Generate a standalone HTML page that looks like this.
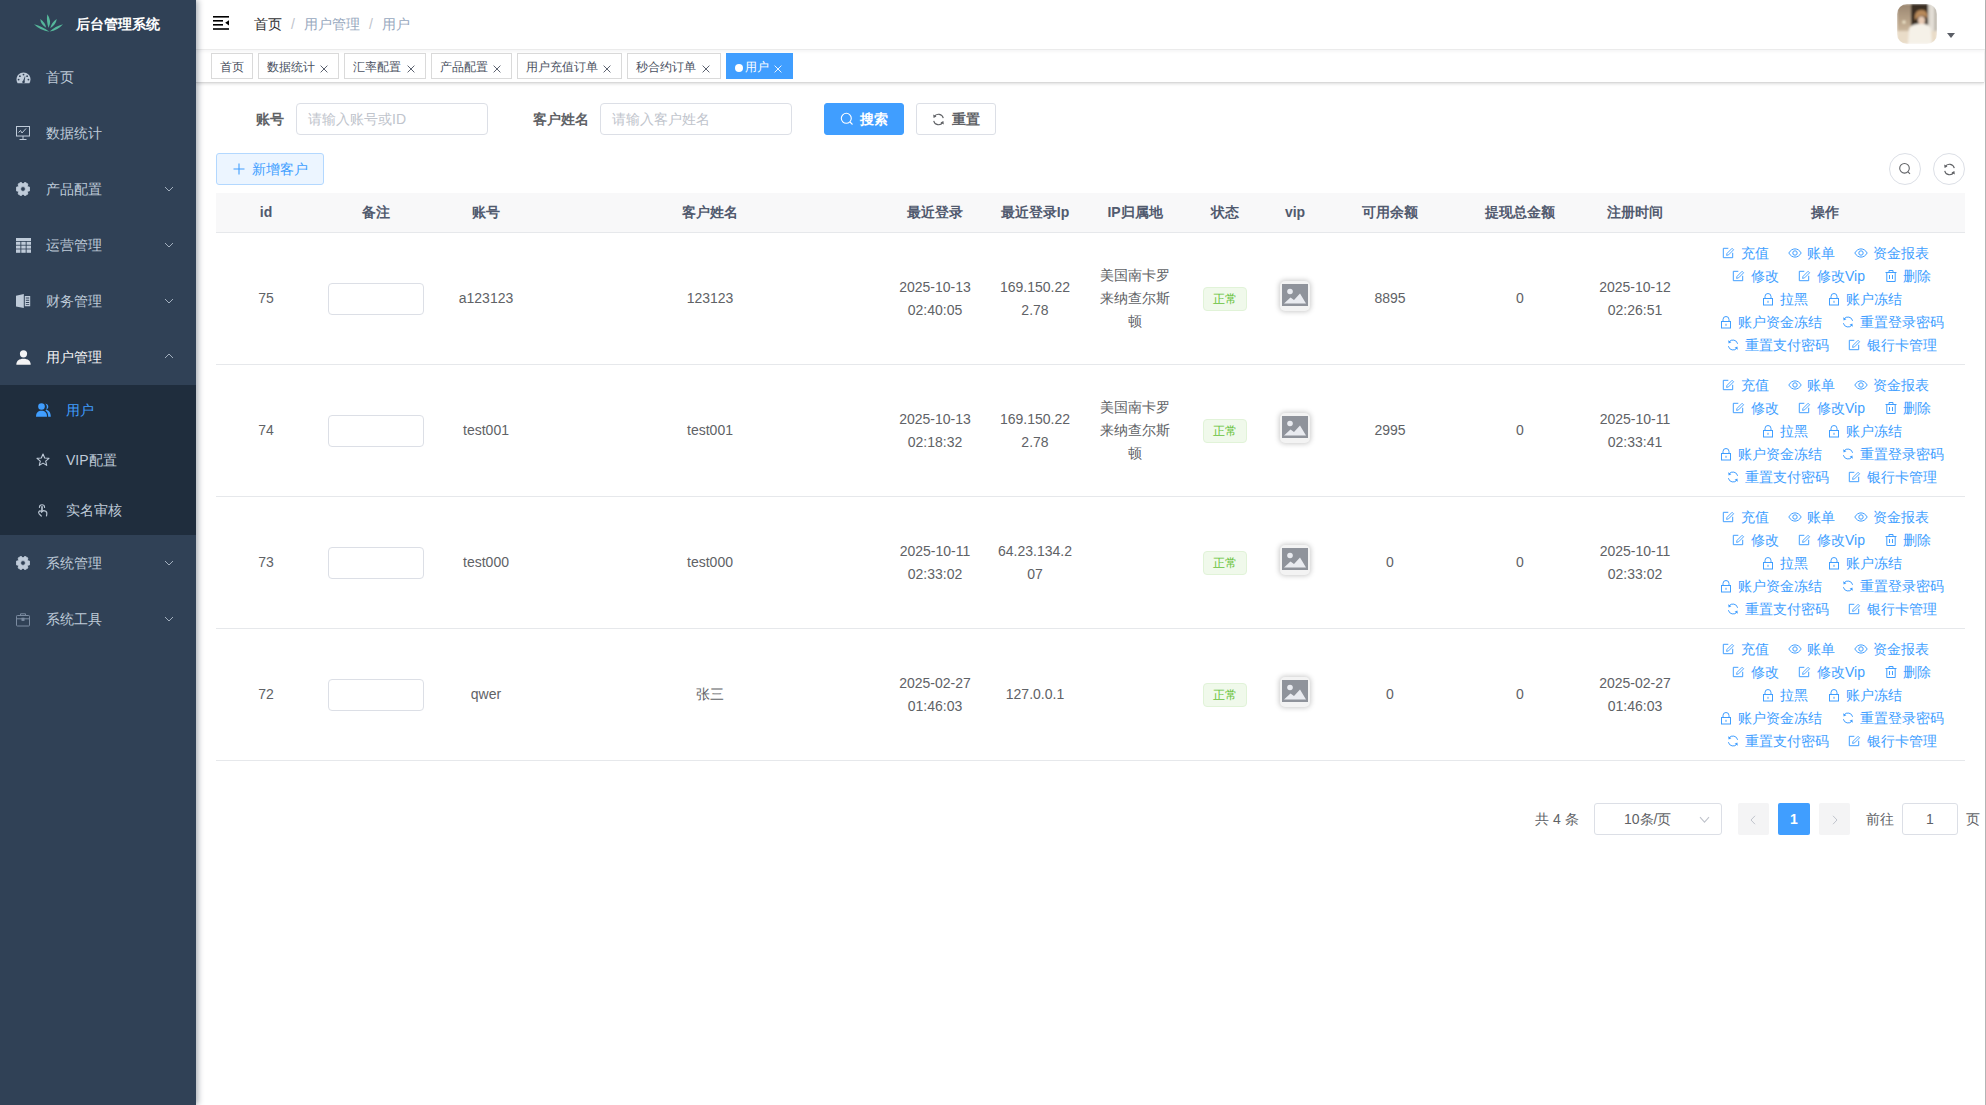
<!DOCTYPE html>
<html><head><meta charset="utf-8">
<style>
*{box-sizing:border-box;margin:0;padding:0}
html,body{width:1986px;height:1105px;overflow:hidden;background:#fff}
body{font-family:"Liberation Sans",sans-serif;font-size:14px;color:#606266;position:relative;-webkit-font-smoothing:antialiased}
.abs{position:absolute}
/* sidebar */
#side{position:absolute;left:0;top:0;width:196px;height:1105px;background:#304156;box-shadow:2px 0 6px rgba(0,21,41,.35);z-index:5}
.logo-t{position:absolute;left:76px;top:14px;font-size:14px;font-weight:bold;color:#fff;line-height:20px;white-space:nowrap}
.mi{position:absolute;left:0;width:196px;height:56px;color:#bfcbd9;font-size:14px;line-height:56px}
.mi .tx{position:absolute;left:46px;top:0}
.mi svg{position:absolute;left:16px;top:21px}
.mi .chev{position:absolute;left:164px;top:25px}
#sub{position:absolute;left:0;top:385px;width:196px;height:150px;background:#1f2d3d}
.si{position:absolute;left:0;width:196px;height:50px;line-height:50px;color:#bfcbd9}
.si .tx{position:absolute;left:66px;top:0}
.si svg{position:absolute;left:36px;top:18px}
/* navbar */
#nav{position:absolute;left:196px;top:0;width:1789px;height:50px;background:#fff;border-bottom:1px solid #ebebeb;box-shadow:0 1px 4px rgba(0,21,41,.06);z-index:1}
#tags{position:absolute;left:196px;top:50px;width:1788px;height:33px;background:#fff;border-bottom:1px solid #d9d9d9;box-shadow:0 1px 3px 0 rgba(0,0,0,.12),0 0 3px 0 rgba(0,0,0,.04)}
.tag{position:absolute;top:3px;height:26px;border:1px solid #dadada;color:#495060;background:#fff;font-size:12px;white-space:nowrap}
.tag .tt{position:absolute;left:8px;top:1px;line-height:24px}
.tag .x{position:absolute;right:10px;top:11px}
.tag.act{background:#409eff;border-color:#409eff;color:#fff}
.tag .dot{position:absolute;left:8px;top:10px;width:8px;height:8px;border-radius:50%;background:#fff}
/* form */
.lbl{position:absolute;font-weight:bold;color:#606266;line-height:32px;white-space:nowrap}
.inp{position:absolute;height:32px;border:1px solid #dcdfe6;border-radius:4px;color:#c0c4cc;line-height:30px;padding-left:11px;white-space:nowrap;background:#fff}
.btn{position:absolute;height:32px;border-radius:3px;line-height:30px;white-space:nowrap;font-weight:bold}
/* table */
#tbl{position:absolute;left:216px;top:193px;width:1749px}
.th{position:absolute;top:0;height:40px;width:100%;background:#f8f8f9;border-bottom:1px solid #e6e8eb}
.tr{position:absolute;left:0;width:100%;height:132px;border-bottom:1px solid #e6e8eb}
.c{position:absolute;top:0;height:100%;display:flex;align-items:center;justify-content:center;text-align:center;line-height:23px;white-space:nowrap}
.th .c{font-weight:bold;color:#515a6e;}
.rin{width:96px;height:32px;border:1px solid #dcdfe6;border-radius:4px;background:#fff}
.stag{display:inline-block;height:24px;line-height:22px;padding:0 9px;font-size:12px;color:#67c23a;background:#f0f9eb;border:1px solid #e1f3d8;border-radius:4px}
.vimg{width:30px;height:30px;border-radius:5px;box-shadow:0 0 5px 1px #ccc;background:#f3f3f3;display:flex;align-items:flex-start;justify-content:center;padding-top:3px;margin-top:-6px}
.ops{display:flex;flex-direction:column;align-items:center;margin-top:2px}
.ol{height:23px;line-height:23px;white-space:nowrap;display:flex;justify-content:center}
.ol.l1,.ol.l2,.ol.l3,.ol.l4{padding-left:13px}
.ob{display:inline-flex;align-items:center;color:#409eff;margin-left:19px}
.ob:first-child{margin-left:0}
.ic{display:block;margin-right:5px;margin-top:-2px}
</style></head><body>
<div id="side">
  <svg class="abs" style="left:33px;top:12px" width="32" height="22" viewBox="0 0 32 22">
    <g fill="#55b79b"><path d="M14.30 2.20 Q13.16 9.17 15.60 15.80 Q19.13 8.60 14.30 2.20 Z"/><path d="M7.20 7.10 Q7.90 13.04 13.20 15.80 Q12.01 10.20 7.20 7.10 Z"/><path d="M23.80 7.10 Q18.72 10.36 17.20 16.20 Q22.77 13.29 23.80 7.10 Z"/><path d="M1.00 12.30 Q7.43 18.66 16.40 19.80 Q9.53 14.34 1.00 12.30 Z"/><path d="M30.00 12.30 Q22.39 14.28 16.60 19.60 Q24.69 18.50 30.00 12.30 Z"/></g>
  </svg>
  <div class="logo-t">后台管理系统</div>

  <div class="mi" style="top:49px">
    <svg width="15" height="12" viewBox="0 0 15 12" style="top:23px"><path fill="#bfcbd9" d="M7.5 0.5 C3.6 0.5 0.5 3.6 0.5 7.5 C0.5 8.9 0.9 10.2 1.6 11.3 L13.4 11.3 C14.1 10.2 14.5 8.9 14.5 7.5 C14.5 3.6 11.4 0.5 7.5 0.5 Z"/><g fill="#304156"><circle cx="7.5" cy="2.6" r="0.9"/><circle cx="3.9" cy="4.2" r="0.9"/><circle cx="11.1" cy="4.2" r="0.9"/><circle cx="2.6" cy="7.6" r="0.9"/><circle cx="12.4" cy="7.6" r="0.9"/><path d="M6.6 10.2 L8.9 4.3 L9.3 4.4 L8.4 10.4 Z"/><circle cx="7.5" cy="10" r="1.2"/></g></svg>
    <span class="tx">首页</span>
  </div>
  <div class="mi" style="top:105px">
    <svg width="14" height="14" viewBox="0 0 14 14" style="top:21px"><g fill="none" stroke="#bfcbd9" stroke-width="1"><rect x="0.5" y="0.5" width="13" height="9.5"/><path d="M2.5 6.5 L4.5 4.5 L6 7 L10 2.5"/><path d="M7 10 V13 M3.5 13.5 H10.5"/></g></svg>
    <span class="tx">数据统计</span>
  </div>
  <div class="mi" style="top:161px">
    <svg width="14" height="14" viewBox="0 0 14 14" style="top:21px;left:16px"><path fill="#bfcbd9" stroke="#bfcbd9" stroke-width="0.8" stroke-linejoin="round" fill-rule="evenodd" d="M11.33 4.50 L13.79 5.31 L13.79 8.69 L11.33 9.50 L11.86 12.04 L8.93 13.73 L7.00 12.00 L5.07 13.73 L2.14 12.04 L2.67 9.50 L0.21 8.69 L0.21 5.31 L2.67 4.50 L2.14 1.96 L5.07 0.27 L7.00 2.00 L8.93 0.27 L11.86 1.96 Z M7 4.6 A2.4 2.4 0 1 0 7 9.4 A2.4 2.4 0 1 0 7 4.6 Z"/></svg>
    <span class="tx">产品配置</span>
    <svg class="chev" width="10" height="6" viewBox="0 0 10 6"><path d="M1 1 L5 5 L9 1" fill="none" stroke="#a9b5c4" stroke-width="0.95"/></svg>
  </div>
  <div class="mi" style="top:217px">
    <svg width="15" height="15" viewBox="0 0 15 15" style="top:21px"><g fill="#bfcbd9"><rect x="0" y="0" width="15" height="3"/><rect x="0" y="3.8" width="4.4" height="3"/><rect x="5.3" y="3.8" width="4.4" height="3"/><rect x="10.6" y="3.8" width="4.4" height="3"/><rect x="0" y="7.6" width="4.4" height="3"/><rect x="5.3" y="7.6" width="4.4" height="3"/><rect x="10.6" y="7.6" width="4.4" height="3"/><rect x="0" y="11.4" width="4.4" height="3.4"/><rect x="5.3" y="11.4" width="4.4" height="3.4"/><rect x="10.6" y="11.4" width="4.4" height="3.4"/></g></svg>
    <span class="tx">运营管理</span>
    <svg class="chev" width="10" height="6" viewBox="0 0 10 6"><path d="M1 1 L5 5 L9 1" fill="none" stroke="#a9b5c4" stroke-width="0.95"/></svg>
  </div>
  <div class="mi" style="top:273px">
    <svg width="15" height="15" viewBox="0 0 15 15" style="top:21px"><g fill="#bfcbd9"><path d="M0 1.8 L7.8 0 L7.8 14 L0 12.5 Z"/><path d="M8.8 2 H14.2 V12.2 H8.8 Z M9.8 3.6 V4.6 H13.2 V3.6 Z M9.8 5.8 V6.8 H13.2 V5.8 Z M9.8 8 V9 H13.2 V8 Z M9.8 10.2 V11.1 H13.2 V10.2 Z" fill-rule="evenodd"/></g></svg>
    <span class="tx">财务管理</span>
    <svg class="chev" width="10" height="6" viewBox="0 0 10 6"><path d="M1 1 L5 5 L9 1" fill="none" stroke="#a9b5c4" stroke-width="0.95"/></svg>
  </div>
  <div class="mi" style="top:329px;color:#f4f4f5">
    <svg width="15" height="15" viewBox="0 0 15 15" style="top:21px"><g fill="#f4f4f5"><circle cx="7.5" cy="3.8" r="3.6"/><path d="M0.3 14.8 C0.3 10.8 3.2 8.8 7.5 8.8 C11.8 8.8 14.7 10.8 14.7 14.8 Z"/></g></svg>
    <span class="tx">用户管理</span>
    <svg class="chev" width="10" height="6" viewBox="0 0 10 6" style="top:24px"><path d="M1 5 L5 1 L9 5" fill="none" stroke="#a9b5c4" stroke-width="0.95"/></svg>
  </div>
  <div id="sub">
    <div class="si" style="top:0;color:#409eff">
      <svg width="15" height="14" viewBox="0 0 15 14" style="top:18px"><g fill="#409eff"><circle cx="5.5" cy="3.5" r="3.3"/><path d="M0 13.8 C0 9.6 2.2 7.8 5.5 7.8 C8.8 7.8 11 9.6 11 13.8 Z"/><path d="M9.2 0.6 C11 0.9 12.3 2.2 12.3 3.8 C12.3 5.2 11.4 6.3 10.1 6.8 C12.9 7.4 14.8 9.4 14.8 13.8 H12.2 C12.2 10.5 11.2 8.6 9.4 7.6 C10.5 6.6 10.9 5.3 10.8 3.8 C10.7 2.5 10.2 1.4 9.2 0.6 Z"/></g></svg>
      <span class="tx">用户</span>
    </div>
    <div class="si" style="top:50px">
      <svg width="14" height="14" viewBox="0 0 14 14" style="top:18px"><path d="M7 1 L8.7 5 L13 5.3 L9.7 8.1 L10.7 12.4 L7 10.1 L3.3 12.4 L4.3 8.1 L1 5.3 L5.3 5 Z" fill="none" stroke="#bfcbd9" stroke-width="1.1" stroke-linejoin="round"/></svg>
      <span class="tx">VIP配置</span>
    </div>
    <div class="si" style="top:100px">
      <svg width="14" height="15" viewBox="0 0 14 15" style="top:18px"><g fill="none" stroke="#b5c1cf" stroke-linecap="round"><path d="M3.4 4.4 A2.6 2.6 0 0 1 8.6 4.4" stroke-width="1.1"/><path d="M6 3.8 V7.6" stroke-width="1.7"/><path d="M3.2 8.2 C2.4 8.8 2.5 9.8 3.2 10.8 L5.3 13" stroke-width="1.2"/><path d="M7.2 7.6 C9 7.6 10.6 8.3 10.8 9.8 C10.9 11 10.7 12 10.5 12.8" stroke-width="1.2"/><path d="M3.4 8.1 L5.6 7.9 M7 8 L5.4 9.4" stroke-width="1.1"/></g></svg>
      <span class="tx">实名审核</span>
    </div>
  </div>
  <div class="mi" style="top:535px">
    <svg width="14" height="14" viewBox="0 0 14 14" style="top:21px;left:16px"><path fill="#bfcbd9" stroke="#bfcbd9" stroke-width="0.8" stroke-linejoin="round" fill-rule="evenodd" d="M11.33 4.50 L13.79 5.31 L13.79 8.69 L11.33 9.50 L11.86 12.04 L8.93 13.73 L7.00 12.00 L5.07 13.73 L2.14 12.04 L2.67 9.50 L0.21 8.69 L0.21 5.31 L2.67 4.50 L2.14 1.96 L5.07 0.27 L7.00 2.00 L8.93 0.27 L11.86 1.96 Z M7 4.6 A2.4 2.4 0 1 0 7 9.4 A2.4 2.4 0 1 0 7 4.6 Z"/></svg>
    <span class="tx">系统管理</span>
    <svg class="chev" width="10" height="6" viewBox="0 0 10 6"><path d="M1 1 L5 5 L9 1" fill="none" stroke="#a9b5c4" stroke-width="0.95"/></svg>
  </div>
  <div class="mi" style="top:591px">
    <svg width="15" height="14" viewBox="0 0 15 14" style="top:22px"><g fill="none" stroke="#7b8ba0" stroke-width="1"><rect x="0.5" y="2.5" width="13" height="10.5" rx="0.8"/><path d="M4.5 2.5 V0.8 H9.5 V2.5"/><path d="M0.5 5.8 H13.5"/><rect x="6" y="5.2" width="2" height="2.2" fill="#7b8ba0"/></g></svg>
    <span class="tx">系统工具</span>
    <svg class="chev" width="10" height="6" viewBox="0 0 10 6"><path d="M1 1 L5 5 L9 1" fill="none" stroke="#a9b5c4" stroke-width="0.95"/></svg>
  </div>
</div>

<div id="nav">
  <svg class="abs" style="left:17px;top:16px" width="16" height="14" viewBox="0 0 16 14"><g fill="#000"><rect x="0" y="0" width="16" height="1.6"/><rect x="0" y="4" width="10" height="1.6"/><rect x="0" y="8" width="10" height="1.6"/><rect x="0" y="12.2" width="16" height="1.6"/><path d="M16 4.2 L12.2 6.8 L16 9.4 Z"/></g></svg>
  <div class="abs" style="left:58px;top:-1px;line-height:50px;font-size:14px;white-space:nowrap">
    <span style="color:#303133">首页</span><span style="color:#c0c4cc;margin:0 9px">/</span><span style="color:#97a8be">用户管理</span><span style="color:#c0c4cc;margin:0 9px">/</span><span style="color:#97a8be">用户</span>
  </div>
  <svg class="abs" style="left:1701px;top:4px" width="40" height="40" viewBox="0 0 40 40">
  <defs><clipPath id="avc"><rect width="40" height="40" rx="10"/></clipPath>
  <linearGradient id="avl" x1="0" y1="0" x2="0" y2="1"><stop offset="0" stop-color="#9a8670"/><stop offset="0.55" stop-color="#c2ad92"/><stop offset="1" stop-color="#e6d8c4"/></linearGradient>
  <linearGradient id="avr" x1="0" y1="0" x2="1" y2="0"><stop offset="0" stop-color="#cfc8bd"/><stop offset="0.5" stop-color="#e9e5de"/><stop offset="1" stop-color="#a9a297"/></linearGradient></defs>
  <filter id="avb" x="-10%" y="-10%" width="120%" height="120%"><feGaussianBlur stdDeviation="0.9"/></filter><g clip-path="url(#avc)"><g filter="url(#avb)">
    <rect width="40" height="40" fill="url(#avl)"/>
    <rect x="14" y="0" width="19" height="24" fill="#3a2e24"/>
    <rect x="31" y="0" width="9" height="40" fill="url(#avr)"/>
    <rect x="0" y="27" width="40" height="13" fill="#e9dcc8"/>
    <circle cx="7" cy="18" r="1.6" fill="#f4ecd0"/>
    <path d="M18 16 C17 9 20 6 24.5 6 C29 6 31 9 30.5 15 C29 12 26 11 23 12 C21 13 19.5 15 18 16 Z" fill="#b8895a"/>
    <ellipse cx="24.5" cy="16.5" rx="3.5" ry="4.2" fill="#e8cbb4"/>
    <path d="M11 40 L12 25 C13 22 16 20.5 20 20 L28 20 C32 21 34 23 34 27 L35 40 Z" fill="#f5f1e8"/>
  </g></g>
</svg>
  <svg class="abs" style="left:1751px;top:33px" width="8" height="5" viewBox="0 0 8 5"><path d="M0 0 H8 L4 5 Z" fill="#5a5e66"/></svg>
</div>
<div id="tags">
  <div class="tag" style="left:15px;width:42px"><span class="tt">首页</span></div>
  <div class="tag" style="left:62px;width:81px"><span class="tt">数据统计</span><svg class="x" width="8" height="8" viewBox="0 0 8 8"><path d="M0.6 0.6 L7.4 7.4 M7.4 0.6 L0.6 7.4" stroke="#495060" stroke-width="0.9"/></svg></div>
  <div class="tag" style="left:148px;width:82px"><span class="tt">汇率配置</span><svg class="x" width="8" height="8" viewBox="0 0 8 8"><path d="M0.6 0.6 L7.4 7.4 M7.4 0.6 L0.6 7.4" stroke="#495060" stroke-width="0.9"/></svg></div>
  <div class="tag" style="left:235px;width:81px"><span class="tt">产品配置</span><svg class="x" width="8" height="8" viewBox="0 0 8 8"><path d="M0.6 0.6 L7.4 7.4 M7.4 0.6 L0.6 7.4" stroke="#495060" stroke-width="0.9"/></svg></div>
  <div class="tag" style="left:321px;width:105px"><span class="tt">用户充值订单</span><svg class="x" width="8" height="8" viewBox="0 0 8 8"><path d="M0.6 0.6 L7.4 7.4 M7.4 0.6 L0.6 7.4" stroke="#495060" stroke-width="0.9"/></svg></div>
  <div class="tag" style="left:431px;width:94px"><span class="tt">秒合约订单</span><svg class="x" width="8" height="8" viewBox="0 0 8 8"><path d="M0.6 0.6 L7.4 7.4 M7.4 0.6 L0.6 7.4" stroke="#495060" stroke-width="0.9"/></svg></div>
  <div class="tag act" style="left:530px;width:67px"><span class="dot"></span><span class="tt" style="left:18px">用户</span><svg class="x" width="8" height="8" viewBox="0 0 8 8"><path d="M0.6 0.6 L7.4 7.4 M7.4 0.6 L0.6 7.4" stroke="#fff" stroke-width="0.9"/></svg></div>
</div>

<div class="lbl" style="left:256px;top:103px">账号</div>
<div class="inp" style="left:296px;top:103px;width:192px">请输入账号或ID</div>
<div class="lbl" style="left:533px;top:103px">客户姓名</div>
<div class="inp" style="left:600px;top:103px;width:192px">请输入客户姓名</div>
<div class="btn" style="left:824px;top:103px;width:80px;background:#409eff;border:1px solid #409eff;color:#fff">
  <svg class="abs" style="left:15px;top:8px" width="14" height="14" viewBox="0 0 14 14"><g fill="none" stroke="#fff" stroke-width="1.1"><circle cx="6.3" cy="6.3" r="5"/><path d="M10 10 L12.5 12.5"/></g></svg>
  <span class="abs" style="left:35px;top:0">搜索</span>
</div>
<div class="btn" style="left:916px;top:103px;width:80px;background:#fff;border:1px solid #dcdfe6;color:#606266">
  <svg class="abs" style="left:15px;top:9px" width="13" height="13" viewBox="0 0 13 13"><g fill="none" stroke="#606266" stroke-width="1.1"><path d="M11.3 5.2 A5 5 0 0 0 2.2 3.6"/><path d="M1.7 7.8 A5 5 0 0 0 10.8 9.4"/></g><path d="M1.2 1.6 L1.6 5 L4.5 3.5 Z M11.8 11.4 L11.4 8 L8.5 9.5 Z" fill="#606266"/></svg>
  <span class="abs" style="left:35px;top:0">重置</span>
</div>

<div class="btn" style="left:216px;top:153px;width:108px;background:#ecf5ff;border:1px solid #b3d8ff;color:#409eff;font-weight:normal">
  <svg class="abs" style="left:16px;top:9px" width="12" height="12" viewBox="0 0 12 12"><path d="M6 0.5 V11.5 M0.5 6 H11.5" stroke="#409eff" stroke-width="1.1"/></svg>
  <span class="abs" style="left:35px;top:0">新增客户</span>
</div>
<div class="abs" style="left:1889px;top:153px;width:32px;height:32px;border:1px solid #dcdfe6;border-radius:50%">
  <svg class="abs" style="left:8px;top:8px" width="14" height="14" viewBox="0 0 14 14"><g fill="none" stroke="#606266" stroke-width="1.1"><circle cx="6.5" cy="6.3" r="4.8"/><path d="M10 9.8 L12 11.8"/></g></svg>
</div>
<div class="abs" style="left:1933px;top:153px;width:32px;height:32px;border:1px solid #dcdfe6;border-radius:50%">
  <svg class="abs" style="left:9px;top:9px" width="13" height="13" viewBox="0 0 13 13"><g fill="none" stroke="#606266" stroke-width="1.1"><path d="M11.3 5.2 A5 5 0 0 0 2.2 3.6"/><path d="M1.7 7.8 A5 5 0 0 0 10.8 9.4"/></g><path d="M1.2 1.6 L1.6 5 L4.5 3.5 Z M11.8 11.4 L11.4 8 L8.5 9.5 Z" fill="#606266"/></svg>
</div>

<!--TABLE-->
<div id="tbl">
<div class="th">
<div class="c" style="left:0px;width:100px">id</div>
<div class="c" style="left:100px;width:120px">备注</div>
<div class="c" style="left:220px;width:100px">账号</div>
<div class="c" style="left:320px;width:348px">客户姓名</div>
<div class="c" style="left:668px;width:102px">最近登录</div>
<div class="c" style="left:770px;width:98px">最近登录Ip</div>
<div class="c" style="left:868px;width:102px">IP归属地</div>
<div class="c" style="left:970px;width:78px">状态</div>
<div class="c" style="left:1048px;width:62px">vip</div>
<div class="c" style="left:1110px;width:128px">可用余额</div>
<div class="c" style="left:1238px;width:132px">提现总金额</div>
<div class="c" style="left:1370px;width:98px">注册时间</div>
<div class="c" style="left:1468px;width:282px">操作</div>
</div>
<div class="tr" style="top:40px">
<div class="c" style="left:0px;width:100px">75</div>
<div class="c" style="left:100px;width:120px"><div class="rin"></div></div>
<div class="c" style="left:220px;width:100px">a123123</div>
<div class="c" style="left:320px;width:348px">123123</div>
<div class="c" style="left:668px;width:102px">2025-10-13<br>02:40:05</div>
<div class="c" style="left:770px;width:98px">169.150.22<br>2.78</div>
<div class="c" style="left:868px;width:102px">美国南卡罗<br>来纳查尔斯<br>顿</div>
<div class="c" style="left:970px;width:78px"><span class="stag">正常</span></div>
<div class="c" style="left:1048px;width:62px"><div class="vimg"><svg width="26" height="22" viewBox="0 0 26 22"><rect width="26" height="22" fill="#8f939b"/><circle cx="8" cy="7.5" r="2.8" fill="#e9ebf0"/><path d="M2 19.5 L8.5 13.5 L12 16 L18 9.5 L24 19.5 Z" fill="#e9ebf0"/></svg></div></div>
<div class="c" style="left:1110px;width:128px">8895</div>
<div class="c" style="left:1238px;width:132px">0</div>
<div class="c" style="left:1370px;width:98px">2025-10-12<br>02:26:51</div>
<div class="c" style="left:1468px;width:282px"><div class="ops"><div class="ol l0"><span class="ob"><svg class="ic" width="14" height="14" viewBox="0 0 14 14"><g fill="none" stroke="#409eff" stroke-width="1"><path d="M6.3 2.3 H1.3 V11.7 H10.7 V6.8"/><path d="M4.6 9.4 L5 7.4 L10.1 2.3 L11.6 3.8 L6.5 8.9 Z" stroke-width="0.9"/></g></svg><span class="ot">充值</span></span><span class="ob"><svg class="ic" width="14" height="14" viewBox="0 0 14 14"><g fill="none" stroke="#409eff" stroke-width="1"><path d="M0.8 7 C2.5 4.2 4.6 2.9 7 2.9 C9.4 2.9 11.5 4.2 13.2 7 C11.5 9.8 9.4 11.1 7 11.1 C4.6 11.1 2.5 9.8 0.8 7 Z"/><circle cx="7" cy="7" r="2.2"/></g></svg><span class="ot">账单</span></span><span class="ob"><svg class="ic" width="14" height="14" viewBox="0 0 14 14"><g fill="none" stroke="#409eff" stroke-width="1"><path d="M0.8 7 C2.5 4.2 4.6 2.9 7 2.9 C9.4 2.9 11.5 4.2 13.2 7 C11.5 9.8 9.4 11.1 7 11.1 C4.6 11.1 2.5 9.8 0.8 7 Z"/><circle cx="7" cy="7" r="2.2"/></g></svg><span class="ot">资金报表</span></span></div><div class="ol l1"><span class="ob"><svg class="ic" width="14" height="14" viewBox="0 0 14 14"><g fill="none" stroke="#409eff" stroke-width="1"><path d="M6.3 2.3 H1.3 V11.7 H10.7 V6.8"/><path d="M4.6 9.4 L5 7.4 L10.1 2.3 L11.6 3.8 L6.5 8.9 Z" stroke-width="0.9"/></g></svg><span class="ot">修改</span></span><span class="ob"><svg class="ic" width="14" height="14" viewBox="0 0 14 14"><g fill="none" stroke="#409eff" stroke-width="1"><path d="M6.3 2.3 H1.3 V11.7 H10.7 V6.8"/><path d="M4.6 9.4 L5 7.4 L10.1 2.3 L11.6 3.8 L6.5 8.9 Z" stroke-width="0.9"/></g></svg><span class="ot">修改Vip</span></span><span class="ob"><svg class="ic" width="14" height="14" viewBox="0 0 14 14"><g fill="none" stroke="#409eff" stroke-width="1"><path d="M1.5 3.5 H12.5"/><path d="M5 3.5 V1.5 H9 V3.5"/><path d="M2.8 3.5 V12.5 H11.2 V3.5"/><path d="M5.5 6 V10 M8.5 6 V10"/></g></svg><span class="ot">删除</span></span></div><div class="ol l2"><span class="ob"><svg class="ic" width="14" height="14" viewBox="0 0 14 14"><g fill="none" stroke="#409eff" stroke-width="1"><path d="M4 6.5 V4.5 A3 3 0 0 1 10 4.5 V6.5"/><rect x="2.5" y="6.5" width="9" height="6.5"/></g><rect x="6.5" y="8.8" width="1" height="2" fill="#409eff"/></svg><span class="ot">拉黑</span></span><span class="ob"><svg class="ic" width="14" height="14" viewBox="0 0 14 14"><g fill="none" stroke="#409eff" stroke-width="1"><path d="M4 6.5 V4.5 A3 3 0 0 1 10 4.5 V6.5"/><rect x="2.5" y="6.5" width="9" height="6.5"/></g><rect x="6.5" y="8.8" width="1" height="2" fill="#409eff"/></svg><span class="ot">账户冻结</span></span></div><div class="ol l3"><span class="ob"><svg class="ic" width="14" height="14" viewBox="0 0 14 14"><g fill="none" stroke="#409eff" stroke-width="1"><path d="M4 6.5 V4.5 A3 3 0 0 1 10 4.5 V6.5"/><rect x="2.5" y="6.5" width="9" height="6.5"/></g><rect x="6.5" y="8.8" width="1" height="2" fill="#409eff"/></svg><span class="ot">账户资金冻结</span></span><span class="ob"><svg class="ic" width="14" height="14" viewBox="0 0 14 14"><g fill="none" stroke="#409eff" stroke-width="1"><path d="M11.6 5.8 A4.8 4.8 0 0 0 3 4"/><path d="M2.4 8.2 A4.8 4.8 0 0 0 11 10"/></g><path d="M2.2 2.2 L2.6 5.6 L5.4 4.2 Z M11.8 11.8 L11.4 8.4 L8.6 9.8 Z" fill="#409eff"/></svg><span class="ot">重置登录密码</span></span></div><div class="ol l4"><span class="ob"><svg class="ic" width="14" height="14" viewBox="0 0 14 14"><g fill="none" stroke="#409eff" stroke-width="1"><path d="M11.6 5.8 A4.8 4.8 0 0 0 3 4"/><path d="M2.4 8.2 A4.8 4.8 0 0 0 11 10"/></g><path d="M2.2 2.2 L2.6 5.6 L5.4 4.2 Z M11.8 11.8 L11.4 8.4 L8.6 9.8 Z" fill="#409eff"/></svg><span class="ot">重置支付密码</span></span><span class="ob"><svg class="ic" width="14" height="14" viewBox="0 0 14 14"><g fill="none" stroke="#409eff" stroke-width="1"><path d="M6.3 2.3 H1.3 V11.7 H10.7 V6.8"/><path d="M4.6 9.4 L5 7.4 L10.1 2.3 L11.6 3.8 L6.5 8.9 Z" stroke-width="0.9"/></g></svg><span class="ot">银行卡管理</span></span></div></div></div>
</div>
<div class="tr" style="top:172px">
<div class="c" style="left:0px;width:100px">74</div>
<div class="c" style="left:100px;width:120px"><div class="rin"></div></div>
<div class="c" style="left:220px;width:100px">test001</div>
<div class="c" style="left:320px;width:348px">test001</div>
<div class="c" style="left:668px;width:102px">2025-10-13<br>02:18:32</div>
<div class="c" style="left:770px;width:98px">169.150.22<br>2.78</div>
<div class="c" style="left:868px;width:102px">美国南卡罗<br>来纳查尔斯<br>顿</div>
<div class="c" style="left:970px;width:78px"><span class="stag">正常</span></div>
<div class="c" style="left:1048px;width:62px"><div class="vimg"><svg width="26" height="22" viewBox="0 0 26 22"><rect width="26" height="22" fill="#8f939b"/><circle cx="8" cy="7.5" r="2.8" fill="#e9ebf0"/><path d="M2 19.5 L8.5 13.5 L12 16 L18 9.5 L24 19.5 Z" fill="#e9ebf0"/></svg></div></div>
<div class="c" style="left:1110px;width:128px">2995</div>
<div class="c" style="left:1238px;width:132px">0</div>
<div class="c" style="left:1370px;width:98px">2025-10-11<br>02:33:41</div>
<div class="c" style="left:1468px;width:282px"><div class="ops"><div class="ol l0"><span class="ob"><svg class="ic" width="14" height="14" viewBox="0 0 14 14"><g fill="none" stroke="#409eff" stroke-width="1"><path d="M6.3 2.3 H1.3 V11.7 H10.7 V6.8"/><path d="M4.6 9.4 L5 7.4 L10.1 2.3 L11.6 3.8 L6.5 8.9 Z" stroke-width="0.9"/></g></svg><span class="ot">充值</span></span><span class="ob"><svg class="ic" width="14" height="14" viewBox="0 0 14 14"><g fill="none" stroke="#409eff" stroke-width="1"><path d="M0.8 7 C2.5 4.2 4.6 2.9 7 2.9 C9.4 2.9 11.5 4.2 13.2 7 C11.5 9.8 9.4 11.1 7 11.1 C4.6 11.1 2.5 9.8 0.8 7 Z"/><circle cx="7" cy="7" r="2.2"/></g></svg><span class="ot">账单</span></span><span class="ob"><svg class="ic" width="14" height="14" viewBox="0 0 14 14"><g fill="none" stroke="#409eff" stroke-width="1"><path d="M0.8 7 C2.5 4.2 4.6 2.9 7 2.9 C9.4 2.9 11.5 4.2 13.2 7 C11.5 9.8 9.4 11.1 7 11.1 C4.6 11.1 2.5 9.8 0.8 7 Z"/><circle cx="7" cy="7" r="2.2"/></g></svg><span class="ot">资金报表</span></span></div><div class="ol l1"><span class="ob"><svg class="ic" width="14" height="14" viewBox="0 0 14 14"><g fill="none" stroke="#409eff" stroke-width="1"><path d="M6.3 2.3 H1.3 V11.7 H10.7 V6.8"/><path d="M4.6 9.4 L5 7.4 L10.1 2.3 L11.6 3.8 L6.5 8.9 Z" stroke-width="0.9"/></g></svg><span class="ot">修改</span></span><span class="ob"><svg class="ic" width="14" height="14" viewBox="0 0 14 14"><g fill="none" stroke="#409eff" stroke-width="1"><path d="M6.3 2.3 H1.3 V11.7 H10.7 V6.8"/><path d="M4.6 9.4 L5 7.4 L10.1 2.3 L11.6 3.8 L6.5 8.9 Z" stroke-width="0.9"/></g></svg><span class="ot">修改Vip</span></span><span class="ob"><svg class="ic" width="14" height="14" viewBox="0 0 14 14"><g fill="none" stroke="#409eff" stroke-width="1"><path d="M1.5 3.5 H12.5"/><path d="M5 3.5 V1.5 H9 V3.5"/><path d="M2.8 3.5 V12.5 H11.2 V3.5"/><path d="M5.5 6 V10 M8.5 6 V10"/></g></svg><span class="ot">删除</span></span></div><div class="ol l2"><span class="ob"><svg class="ic" width="14" height="14" viewBox="0 0 14 14"><g fill="none" stroke="#409eff" stroke-width="1"><path d="M4 6.5 V4.5 A3 3 0 0 1 10 4.5 V6.5"/><rect x="2.5" y="6.5" width="9" height="6.5"/></g><rect x="6.5" y="8.8" width="1" height="2" fill="#409eff"/></svg><span class="ot">拉黑</span></span><span class="ob"><svg class="ic" width="14" height="14" viewBox="0 0 14 14"><g fill="none" stroke="#409eff" stroke-width="1"><path d="M4 6.5 V4.5 A3 3 0 0 1 10 4.5 V6.5"/><rect x="2.5" y="6.5" width="9" height="6.5"/></g><rect x="6.5" y="8.8" width="1" height="2" fill="#409eff"/></svg><span class="ot">账户冻结</span></span></div><div class="ol l3"><span class="ob"><svg class="ic" width="14" height="14" viewBox="0 0 14 14"><g fill="none" stroke="#409eff" stroke-width="1"><path d="M4 6.5 V4.5 A3 3 0 0 1 10 4.5 V6.5"/><rect x="2.5" y="6.5" width="9" height="6.5"/></g><rect x="6.5" y="8.8" width="1" height="2" fill="#409eff"/></svg><span class="ot">账户资金冻结</span></span><span class="ob"><svg class="ic" width="14" height="14" viewBox="0 0 14 14"><g fill="none" stroke="#409eff" stroke-width="1"><path d="M11.6 5.8 A4.8 4.8 0 0 0 3 4"/><path d="M2.4 8.2 A4.8 4.8 0 0 0 11 10"/></g><path d="M2.2 2.2 L2.6 5.6 L5.4 4.2 Z M11.8 11.8 L11.4 8.4 L8.6 9.8 Z" fill="#409eff"/></svg><span class="ot">重置登录密码</span></span></div><div class="ol l4"><span class="ob"><svg class="ic" width="14" height="14" viewBox="0 0 14 14"><g fill="none" stroke="#409eff" stroke-width="1"><path d="M11.6 5.8 A4.8 4.8 0 0 0 3 4"/><path d="M2.4 8.2 A4.8 4.8 0 0 0 11 10"/></g><path d="M2.2 2.2 L2.6 5.6 L5.4 4.2 Z M11.8 11.8 L11.4 8.4 L8.6 9.8 Z" fill="#409eff"/></svg><span class="ot">重置支付密码</span></span><span class="ob"><svg class="ic" width="14" height="14" viewBox="0 0 14 14"><g fill="none" stroke="#409eff" stroke-width="1"><path d="M6.3 2.3 H1.3 V11.7 H10.7 V6.8"/><path d="M4.6 9.4 L5 7.4 L10.1 2.3 L11.6 3.8 L6.5 8.9 Z" stroke-width="0.9"/></g></svg><span class="ot">银行卡管理</span></span></div></div></div>
</div>
<div class="tr" style="top:304px">
<div class="c" style="left:0px;width:100px">73</div>
<div class="c" style="left:100px;width:120px"><div class="rin"></div></div>
<div class="c" style="left:220px;width:100px">test000</div>
<div class="c" style="left:320px;width:348px">test000</div>
<div class="c" style="left:668px;width:102px">2025-10-11<br>02:33:02</div>
<div class="c" style="left:770px;width:98px">64.23.134.2<br>07</div>
<div class="c" style="left:868px;width:102px"></div>
<div class="c" style="left:970px;width:78px"><span class="stag">正常</span></div>
<div class="c" style="left:1048px;width:62px"><div class="vimg"><svg width="26" height="22" viewBox="0 0 26 22"><rect width="26" height="22" fill="#8f939b"/><circle cx="8" cy="7.5" r="2.8" fill="#e9ebf0"/><path d="M2 19.5 L8.5 13.5 L12 16 L18 9.5 L24 19.5 Z" fill="#e9ebf0"/></svg></div></div>
<div class="c" style="left:1110px;width:128px">0</div>
<div class="c" style="left:1238px;width:132px">0</div>
<div class="c" style="left:1370px;width:98px">2025-10-11<br>02:33:02</div>
<div class="c" style="left:1468px;width:282px"><div class="ops"><div class="ol l0"><span class="ob"><svg class="ic" width="14" height="14" viewBox="0 0 14 14"><g fill="none" stroke="#409eff" stroke-width="1"><path d="M6.3 2.3 H1.3 V11.7 H10.7 V6.8"/><path d="M4.6 9.4 L5 7.4 L10.1 2.3 L11.6 3.8 L6.5 8.9 Z" stroke-width="0.9"/></g></svg><span class="ot">充值</span></span><span class="ob"><svg class="ic" width="14" height="14" viewBox="0 0 14 14"><g fill="none" stroke="#409eff" stroke-width="1"><path d="M0.8 7 C2.5 4.2 4.6 2.9 7 2.9 C9.4 2.9 11.5 4.2 13.2 7 C11.5 9.8 9.4 11.1 7 11.1 C4.6 11.1 2.5 9.8 0.8 7 Z"/><circle cx="7" cy="7" r="2.2"/></g></svg><span class="ot">账单</span></span><span class="ob"><svg class="ic" width="14" height="14" viewBox="0 0 14 14"><g fill="none" stroke="#409eff" stroke-width="1"><path d="M0.8 7 C2.5 4.2 4.6 2.9 7 2.9 C9.4 2.9 11.5 4.2 13.2 7 C11.5 9.8 9.4 11.1 7 11.1 C4.6 11.1 2.5 9.8 0.8 7 Z"/><circle cx="7" cy="7" r="2.2"/></g></svg><span class="ot">资金报表</span></span></div><div class="ol l1"><span class="ob"><svg class="ic" width="14" height="14" viewBox="0 0 14 14"><g fill="none" stroke="#409eff" stroke-width="1"><path d="M6.3 2.3 H1.3 V11.7 H10.7 V6.8"/><path d="M4.6 9.4 L5 7.4 L10.1 2.3 L11.6 3.8 L6.5 8.9 Z" stroke-width="0.9"/></g></svg><span class="ot">修改</span></span><span class="ob"><svg class="ic" width="14" height="14" viewBox="0 0 14 14"><g fill="none" stroke="#409eff" stroke-width="1"><path d="M6.3 2.3 H1.3 V11.7 H10.7 V6.8"/><path d="M4.6 9.4 L5 7.4 L10.1 2.3 L11.6 3.8 L6.5 8.9 Z" stroke-width="0.9"/></g></svg><span class="ot">修改Vip</span></span><span class="ob"><svg class="ic" width="14" height="14" viewBox="0 0 14 14"><g fill="none" stroke="#409eff" stroke-width="1"><path d="M1.5 3.5 H12.5"/><path d="M5 3.5 V1.5 H9 V3.5"/><path d="M2.8 3.5 V12.5 H11.2 V3.5"/><path d="M5.5 6 V10 M8.5 6 V10"/></g></svg><span class="ot">删除</span></span></div><div class="ol l2"><span class="ob"><svg class="ic" width="14" height="14" viewBox="0 0 14 14"><g fill="none" stroke="#409eff" stroke-width="1"><path d="M4 6.5 V4.5 A3 3 0 0 1 10 4.5 V6.5"/><rect x="2.5" y="6.5" width="9" height="6.5"/></g><rect x="6.5" y="8.8" width="1" height="2" fill="#409eff"/></svg><span class="ot">拉黑</span></span><span class="ob"><svg class="ic" width="14" height="14" viewBox="0 0 14 14"><g fill="none" stroke="#409eff" stroke-width="1"><path d="M4 6.5 V4.5 A3 3 0 0 1 10 4.5 V6.5"/><rect x="2.5" y="6.5" width="9" height="6.5"/></g><rect x="6.5" y="8.8" width="1" height="2" fill="#409eff"/></svg><span class="ot">账户冻结</span></span></div><div class="ol l3"><span class="ob"><svg class="ic" width="14" height="14" viewBox="0 0 14 14"><g fill="none" stroke="#409eff" stroke-width="1"><path d="M4 6.5 V4.5 A3 3 0 0 1 10 4.5 V6.5"/><rect x="2.5" y="6.5" width="9" height="6.5"/></g><rect x="6.5" y="8.8" width="1" height="2" fill="#409eff"/></svg><span class="ot">账户资金冻结</span></span><span class="ob"><svg class="ic" width="14" height="14" viewBox="0 0 14 14"><g fill="none" stroke="#409eff" stroke-width="1"><path d="M11.6 5.8 A4.8 4.8 0 0 0 3 4"/><path d="M2.4 8.2 A4.8 4.8 0 0 0 11 10"/></g><path d="M2.2 2.2 L2.6 5.6 L5.4 4.2 Z M11.8 11.8 L11.4 8.4 L8.6 9.8 Z" fill="#409eff"/></svg><span class="ot">重置登录密码</span></span></div><div class="ol l4"><span class="ob"><svg class="ic" width="14" height="14" viewBox="0 0 14 14"><g fill="none" stroke="#409eff" stroke-width="1"><path d="M11.6 5.8 A4.8 4.8 0 0 0 3 4"/><path d="M2.4 8.2 A4.8 4.8 0 0 0 11 10"/></g><path d="M2.2 2.2 L2.6 5.6 L5.4 4.2 Z M11.8 11.8 L11.4 8.4 L8.6 9.8 Z" fill="#409eff"/></svg><span class="ot">重置支付密码</span></span><span class="ob"><svg class="ic" width="14" height="14" viewBox="0 0 14 14"><g fill="none" stroke="#409eff" stroke-width="1"><path d="M6.3 2.3 H1.3 V11.7 H10.7 V6.8"/><path d="M4.6 9.4 L5 7.4 L10.1 2.3 L11.6 3.8 L6.5 8.9 Z" stroke-width="0.9"/></g></svg><span class="ot">银行卡管理</span></span></div></div></div>
</div>
<div class="tr" style="top:436px">
<div class="c" style="left:0px;width:100px">72</div>
<div class="c" style="left:100px;width:120px"><div class="rin"></div></div>
<div class="c" style="left:220px;width:100px">qwer</div>
<div class="c" style="left:320px;width:348px">张三</div>
<div class="c" style="left:668px;width:102px">2025-02-27<br>01:46:03</div>
<div class="c" style="left:770px;width:98px">127.0.0.1</div>
<div class="c" style="left:868px;width:102px"></div>
<div class="c" style="left:970px;width:78px"><span class="stag">正常</span></div>
<div class="c" style="left:1048px;width:62px"><div class="vimg"><svg width="26" height="22" viewBox="0 0 26 22"><rect width="26" height="22" fill="#8f939b"/><circle cx="8" cy="7.5" r="2.8" fill="#e9ebf0"/><path d="M2 19.5 L8.5 13.5 L12 16 L18 9.5 L24 19.5 Z" fill="#e9ebf0"/></svg></div></div>
<div class="c" style="left:1110px;width:128px">0</div>
<div class="c" style="left:1238px;width:132px">0</div>
<div class="c" style="left:1370px;width:98px">2025-02-27<br>01:46:03</div>
<div class="c" style="left:1468px;width:282px"><div class="ops"><div class="ol l0"><span class="ob"><svg class="ic" width="14" height="14" viewBox="0 0 14 14"><g fill="none" stroke="#409eff" stroke-width="1"><path d="M6.3 2.3 H1.3 V11.7 H10.7 V6.8"/><path d="M4.6 9.4 L5 7.4 L10.1 2.3 L11.6 3.8 L6.5 8.9 Z" stroke-width="0.9"/></g></svg><span class="ot">充值</span></span><span class="ob"><svg class="ic" width="14" height="14" viewBox="0 0 14 14"><g fill="none" stroke="#409eff" stroke-width="1"><path d="M0.8 7 C2.5 4.2 4.6 2.9 7 2.9 C9.4 2.9 11.5 4.2 13.2 7 C11.5 9.8 9.4 11.1 7 11.1 C4.6 11.1 2.5 9.8 0.8 7 Z"/><circle cx="7" cy="7" r="2.2"/></g></svg><span class="ot">账单</span></span><span class="ob"><svg class="ic" width="14" height="14" viewBox="0 0 14 14"><g fill="none" stroke="#409eff" stroke-width="1"><path d="M0.8 7 C2.5 4.2 4.6 2.9 7 2.9 C9.4 2.9 11.5 4.2 13.2 7 C11.5 9.8 9.4 11.1 7 11.1 C4.6 11.1 2.5 9.8 0.8 7 Z"/><circle cx="7" cy="7" r="2.2"/></g></svg><span class="ot">资金报表</span></span></div><div class="ol l1"><span class="ob"><svg class="ic" width="14" height="14" viewBox="0 0 14 14"><g fill="none" stroke="#409eff" stroke-width="1"><path d="M6.3 2.3 H1.3 V11.7 H10.7 V6.8"/><path d="M4.6 9.4 L5 7.4 L10.1 2.3 L11.6 3.8 L6.5 8.9 Z" stroke-width="0.9"/></g></svg><span class="ot">修改</span></span><span class="ob"><svg class="ic" width="14" height="14" viewBox="0 0 14 14"><g fill="none" stroke="#409eff" stroke-width="1"><path d="M6.3 2.3 H1.3 V11.7 H10.7 V6.8"/><path d="M4.6 9.4 L5 7.4 L10.1 2.3 L11.6 3.8 L6.5 8.9 Z" stroke-width="0.9"/></g></svg><span class="ot">修改Vip</span></span><span class="ob"><svg class="ic" width="14" height="14" viewBox="0 0 14 14"><g fill="none" stroke="#409eff" stroke-width="1"><path d="M1.5 3.5 H12.5"/><path d="M5 3.5 V1.5 H9 V3.5"/><path d="M2.8 3.5 V12.5 H11.2 V3.5"/><path d="M5.5 6 V10 M8.5 6 V10"/></g></svg><span class="ot">删除</span></span></div><div class="ol l2"><span class="ob"><svg class="ic" width="14" height="14" viewBox="0 0 14 14"><g fill="none" stroke="#409eff" stroke-width="1"><path d="M4 6.5 V4.5 A3 3 0 0 1 10 4.5 V6.5"/><rect x="2.5" y="6.5" width="9" height="6.5"/></g><rect x="6.5" y="8.8" width="1" height="2" fill="#409eff"/></svg><span class="ot">拉黑</span></span><span class="ob"><svg class="ic" width="14" height="14" viewBox="0 0 14 14"><g fill="none" stroke="#409eff" stroke-width="1"><path d="M4 6.5 V4.5 A3 3 0 0 1 10 4.5 V6.5"/><rect x="2.5" y="6.5" width="9" height="6.5"/></g><rect x="6.5" y="8.8" width="1" height="2" fill="#409eff"/></svg><span class="ot">账户冻结</span></span></div><div class="ol l3"><span class="ob"><svg class="ic" width="14" height="14" viewBox="0 0 14 14"><g fill="none" stroke="#409eff" stroke-width="1"><path d="M4 6.5 V4.5 A3 3 0 0 1 10 4.5 V6.5"/><rect x="2.5" y="6.5" width="9" height="6.5"/></g><rect x="6.5" y="8.8" width="1" height="2" fill="#409eff"/></svg><span class="ot">账户资金冻结</span></span><span class="ob"><svg class="ic" width="14" height="14" viewBox="0 0 14 14"><g fill="none" stroke="#409eff" stroke-width="1"><path d="M11.6 5.8 A4.8 4.8 0 0 0 3 4"/><path d="M2.4 8.2 A4.8 4.8 0 0 0 11 10"/></g><path d="M2.2 2.2 L2.6 5.6 L5.4 4.2 Z M11.8 11.8 L11.4 8.4 L8.6 9.8 Z" fill="#409eff"/></svg><span class="ot">重置登录密码</span></span></div><div class="ol l4"><span class="ob"><svg class="ic" width="14" height="14" viewBox="0 0 14 14"><g fill="none" stroke="#409eff" stroke-width="1"><path d="M11.6 5.8 A4.8 4.8 0 0 0 3 4"/><path d="M2.4 8.2 A4.8 4.8 0 0 0 11 10"/></g><path d="M2.2 2.2 L2.6 5.6 L5.4 4.2 Z M11.8 11.8 L11.4 8.4 L8.6 9.8 Z" fill="#409eff"/></svg><span class="ot">重置支付密码</span></span><span class="ob"><svg class="ic" width="14" height="14" viewBox="0 0 14 14"><g fill="none" stroke="#409eff" stroke-width="1"><path d="M6.3 2.3 H1.3 V11.7 H10.7 V6.8"/><path d="M4.6 9.4 L5 7.4 L10.1 2.3 L11.6 3.8 L6.5 8.9 Z" stroke-width="0.9"/></g></svg><span class="ot">银行卡管理</span></span></div></div></div>
</div>
</div>
<!--/TABLE-->
<!--PAG-->
<div class="abs" style="left:1535px;top:803px;line-height:32px;white-space:nowrap;color:#606266">共 4 条</div>
<div class="abs" style="left:1594px;top:803px;width:128px;height:32px;border:1px solid #dcdfe6;border-radius:3px;line-height:30px;color:#606266">
  <span class="abs" style="left:29px;top:0">10条/页</span>
  <svg class="abs" style="left:104px;top:12px" width="11" height="8" viewBox="0 0 11 8"><path d="M1 1.2 L5.5 6.2 L10 1.2" fill="none" stroke="#c0c4cc" stroke-width="1.1"/></svg>
</div>
<div class="abs" style="left:1738px;top:803px;width:31px;height:32px;background:#f4f4f5;border-radius:2px">
  <svg class="abs" style="left:12px;top:12px" width="6" height="10" viewBox="0 0 6 10"><path d="M5 0.8 L1 5 L5 9.2" fill="none" stroke="#c0c4cc" stroke-width="1"/></svg>
</div>
<div class="abs" style="left:1778px;top:803px;width:32px;height:32px;background:#409eff;border-radius:2px;color:#fff;font-weight:bold;text-align:center;line-height:32px">1</div>
<div class="abs" style="left:1819px;top:803px;width:31px;height:32px;background:#f4f4f5;border-radius:2px">
  <svg class="abs" style="left:13px;top:12px" width="6" height="10" viewBox="0 0 6 10"><path d="M1 0.8 L5 5 L1 9.2" fill="none" stroke="#c0c4cc" stroke-width="1"/></svg>
</div>
<div class="abs" style="left:1866px;top:803px;line-height:32px;white-space:nowrap;color:#606266">前往</div>
<div class="abs" style="left:1902px;top:803px;width:56px;height:32px;border:1px solid #dcdfe6;border-radius:3px;line-height:30px;text-align:center;color:#606266">1</div>
<div class="abs" style="left:1966px;top:803px;line-height:32px;white-space:nowrap;color:#606266">页</div>
<div class="abs" style="left:1985px;top:0;width:1px;height:1105px;background:#b4b4b4"></div>
<!--/PAG-->
</body></html>
